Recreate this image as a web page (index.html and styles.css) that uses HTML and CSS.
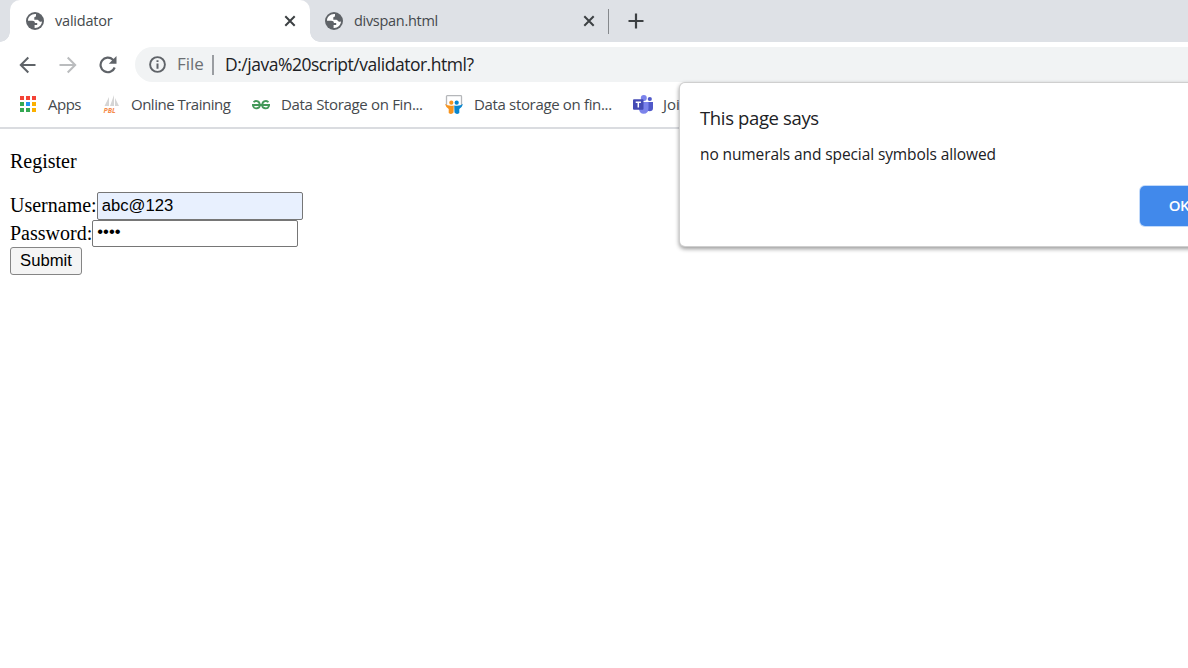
FILE: index.html
```
<!DOCTYPE html>
<html lang="en">
<head>
<meta charset="utf-8">
<title>validator</title>
<link rel="stylesheet" href="styles.css">
</head>
<body>
<svg class="defs" width="0" height="0">
  <symbol id="globe" viewBox="0 0 18 18">
    <circle cx="9" cy="9" r="9" fill="#5f6368"/>
    <path d="M10 2.1C5.5 1.600 2 4.800 2 8.700H6.200C8 8.700 8.900 9.600 8.900 11H11.200V13H8.600V15.900C12.600 16.200 16 13 16 9.200C15.300 9.900 14.500 10.100 13.600 9.500C12.700 8.900 12.500 7.700 11.300 7.700H8.300V5.300C9.500 5.300 10 4.500 10 3.600Z" fill="#fff"/>
  </symbol>
  <symbol id="close" viewBox="0 0 12 12"><path d="M1.300 1.300L10.700 10.700M10.700 1.300L1.300 10.700" stroke="#3c4043" stroke-width="2"/></symbol>
</svg>
<header class="browser">
  <div class="tabs">
    <div class="tab active">
      <svg class="globe"><use href="#globe"/></svg>
      <span class="title t-validator">validator</span>
      <svg class="close"><use href="#close"/></svg>
    </div>
    <div class="tab">
      <svg class="globe"><use href="#globe"/></svg>
      <span class="title t-divspan">divspan.html</span>
      <svg class="close"><use href="#close"/></svg>
    </div>
    <span class="tab-divider"></span>
    <svg class="plus" viewBox="0 0 16 16"><path d="M8 .5V15.500M.5 8H15.500" stroke="#3c4043" stroke-width="2.200"/></svg>
  </div>
  <div class="toolbar">
    <svg class="nav back" viewBox="0 0 18 18"><path d="M16.500 9H2M9.300 1.500L1.800 9L9.300 16.500" fill="none" stroke="#5f6368" stroke-width="2"/></svg>
    <svg class="nav forward" viewBox="0 0 18 18"><path d="M.5 9H16M8.700 1.500L16.200 9L8.700 16.500" fill="none" stroke="#babcbe" stroke-width="2"/></svg>
    <svg class="nav reload" viewBox="0 0 18 18"><path d="M15.700 11.500A7.300 7.300 0 1 1 14 3.700L15.500 5.300" fill="none" stroke="#5f6368" stroke-width="2.200"/><path d="M17.500 0V7.700H9.800Z" fill="#5f6368"/></svg>
    <div class="omnibox">
      <svg class="info" viewBox="0 0 17 17"><circle cx="8.500" cy="8.500" r="7.400" fill="none" stroke="#5f6368" stroke-width="1.900"/><path d="M8.500 7.400V12.700M8.500 4.200V6.100" stroke="#5f6368" stroke-width="2"/></svg>
      <span class="scheme">File</span>
      <span class="url-divider"></span>
      <span class="url">D:/java%20script/validator.html?</span>
    </div>
  </div>
  <nav class="bookmarks">
    <svg class="b-icon" viewBox="0 0 18 18">
      <path d="M1 1h4v4H1zM7 1h4v4H7zM13 1h4v4h-4z" fill="#f44336"/>
      <path d="M1 7h4v4H1zM1 13h4v4H1zM7 13h4v4H7z" fill="#34a853"/>
      <path d="M7 7h4v4H7z" fill="#2196f3"/>
      <path d="M13 7h4v4h-4zM13 13h4v4h-4z" fill="#fbb000"/>
    </svg>
    <span class="label l-apps">Apps</span>
    <svg class="b-icon pbl-icon" viewBox="0 0 18 18">
      <path d="M1.500 11L6 2V11ZM7 11L11 0V11ZM12 11V3L16 11Z" fill="#d5d5d5"/>
      <text class="pbl" x="0.500" y="17.700">PBL</text>
    </svg>
    <span class="label l-training">Online Training</span>
    <svg class="b-icon" viewBox="0 0 18 18">
      <path d="M1.600 7.200C3 5.300 7.600 5.400 7.800 10C8 14 2.300 14.300 1.300 11.500L.8 10H17.200L16.700 11.500C15.700 14.300 10 14 10.200 10C10.400 5.400 15 5.300 16.400 7.200" fill="none" stroke="#2f8d46" stroke-opacity=".9" stroke-width="1.900"/>
    </svg>
    <span class="label l-storage">Data Storage on Fin...</span>
    <svg class="b-icon slides" viewBox="0 0 18 19">
      <path d="M1.500 10V1.500Q1.500 .7 2.300 .7H15.700Q16.500 .7 16.500 1.500V10" fill="#fff" stroke="#b5b7ba" stroke-width="1.300"/>
      <circle cx="6.300" cy="7.700" r="2.100" fill="#f7941e"/><circle cx="11.700" cy="7.700" r="2.100" fill="#0886cf"/>
      <path d="M0 9Q3 11.300 8.800 10.500L8.500 17.500Q6.500 20 3.700 18V14Q1 12.600 0 9Z" fill="#f7941e"/>
      <path d="M18 9Q15 11.300 9.200 10.500L9.500 17.500Q11.500 20 14.300 18V14Q17 12.600 18 9Z" fill="#0886cf"/>
    </svg>
    <span class="label l-storage2">Data storage on fin...</span>
    <svg class="b-icon teams" viewBox="0 0 20 19">
      <circle cx="16.800" cy="4" r="2.100" fill="#5059c9"/><circle cx="10.800" cy="3" r="3" fill="#7b83eb"/>
      <path d="M13 7H20V13Q20 16.300 16.500 16.300Q14 16.300 13 14Z" fill="#5059c9"/>
      <path d="M6 7H15.500V13Q15.500 18.800 10.500 18.800Q6.500 18.800 6 14Z" fill="#7b83eb"/>
      <rect y="4.300" width="10.500" height="10.500" rx="1" fill="#444bb5"/>
      <path d="M2.700 7.200H7.900M5.300 7.200V12.500" stroke="#fff" stroke-width="1.500"/>
    </svg>
    <span class="label l-join">Joi</span>
  </nav>
</header>
<main class="page">
  <p class="heading">Register</p>
  <form>
    <div class="row"><label for="user">Username:</label><input id="user" class="filled" type="text" value="abc@123"></div>
    <div class="row"><label for="pass">Password:</label><input id="pass" class="password" type="text" value="••••"></div>
    <button type="button" class="submit">Submit</button>
  </form>
</main>
<section class="dialog" role="alertdialog">
  <h1 class="says">This page says</h1>
  <p class="message">no numerals and special symbols allowed</p>
  <button class="ok" type="button">OK</button>
</section>
</body>
</html>
```
FILE: styles.css
```
* { box-sizing: border-box; }
body { margin: 0; width: 1188px; height: 668px; overflow: hidden; position: relative; background: #fff; font-family: "Open Sans", "Noto Sans", sans-serif; }
svg { display: block; flex: none; }
.defs { position: absolute; }
.tabs { height: 42px; display: flex; align-items: center; background: #dee1e6; padding-left: 10px; }
.tab { position: relative; height: 42px; width: 298px; display: flex; align-items: center; padding: 0 13px 0 15px; }
.active { width: 300px; background: #fff; border-radius: 10px 10px 0 0; padding: 0 14px 0 16px; }
.active::before, .active::after { content: ""; position: absolute; bottom: 0; width: 10px; height: 10px; }
.active::before { left: -10px; background: radial-gradient(circle at 0 0, transparent 9.5px, #fff 10px); }
.active::after { right: -10px; background: radial-gradient(circle at 100% 0, transparent 9.5px, #fff 10px); }
.globe { width: 18px; height: 18px; margin-right: 11px; }
.title { flex: 1; font-size: 14.5px; line-height: 20px; color: #45494d; white-space: nowrap; }
.t-validator { letter-spacing: -.2px; }
.t-divspan { letter-spacing: -.3px; }
.close { width: 12px; height: 12px; }
.tab-divider { width: 1px; height: 25px; background: #85888c; }
.plus { width: 16px; height: 16px; margin-left: 19px; }
.toolbar { height: 40px; padding: 5px 0 0 19px; display: flex; align-items: center; }
.nav { width: 18px; height: 18px; }
.forward { margin-left: 22px; }
.reload { margin-left: 22px; }
.omnibox { flex: 1; margin-left: 18px; height: 35px; display: flex; align-items: center; border-radius: 18px 0 0 18px; background: #f1f3f4; padding-left: 14px; white-space: nowrap; }
.info { width: 17px; height: 17px; }
.scheme { width: 35px; margin-left: 11px; font-size: 17px; line-height: 24px; padding-bottom: 1px; color: #6b6f73; }
.url-divider { width: 2px; height: 20px; background: #9a9da1; }
.url { margin-left: 11px; font-size: 17.5px; line-height: 24px; padding-bottom: 1px; letter-spacing: -.48px; color: #202124; }
.bookmarks { height: 47px; border-bottom: 2px solid #dadce0; display: flex; align-items: center; padding: 0 0 1px 19px; white-space: nowrap; }
.b-icon { width: 18px; height: 18px; }
.pbl-icon { overflow: visible; }
.slides { height: 19px; }
.teams { width: 20px; height: 19px; }
.label { font-size: 15px; line-height: 20px; color: #45494d; margin-left: 11px; }
.l-apps { width: 55px; letter-spacing: -.5px; }
.l-training { width: 121px; margin-left: 10px; letter-spacing: -.5px; }
.l-storage { width: 164px; letter-spacing: -.33px; }
.l-storage2 { width: 159px; letter-spacing: -.34px; }
.l-join { margin-left: 10px; }
.pbl { font: italic bold 7px "Open Sans", sans-serif; fill: #f58a4b; }
.page { padding: 21px 10px; font: 20px/23px "Liberation Serif", serif; color: #000; }
.heading { margin: 0 0 19px; }
.row { display: flex; height: 28px; }
.row + .row { height: 27px; }
.row label { line-height: 27px; }
.row input { width: 206px; height: 28px; padding: 0 4px; border: 1px solid #767676; border-radius: 2px; background: #fff; font: 16.670px "Liberation Sans", sans-serif; color: #000; }
.row .filled { background: #e8f0fe; }
.row .password { height: 27px; padding-bottom: 3px; }
.submit { display: block; width: 72px; height: 28px; padding: 0; border: 1px solid #858585; border-radius: 3px; background: #f4f4f4; font: 16.670px "Liberation Sans", sans-serif; color: #000; }
.dialog { position: absolute; left: 680px; top: 83px; width: 560px; height: 163px; padding: 23px 20px 20px; display: flex; flex-direction: column; border-radius: 5px; background: #fff; box-shadow: 0 0 0 1px #cfcfcf, 0 2px 4px 1px rgba(0,0,0,.4); white-space: nowrap; }
.says { margin: 0; font-size: 18.500px; line-height: 24px; font-weight: 400; letter-spacing: -.36px; color: #202124; }
.message { margin: 14px 0 0; font-size: 15.500px; line-height: 20px; letter-spacing: -.1px; color: #202124; }
.ok { align-self: flex-end; margin-top: 22px; width: 80px; height: 40px; border: 0; border-radius: 5px; padding: 0 2px 2px 0; background: #4189eb; box-shadow: 0 0 0 1px #c2dafa; color: #fff; font: 600 15px "Open Sans", sans-serif; letter-spacing: -.5px; }
```
